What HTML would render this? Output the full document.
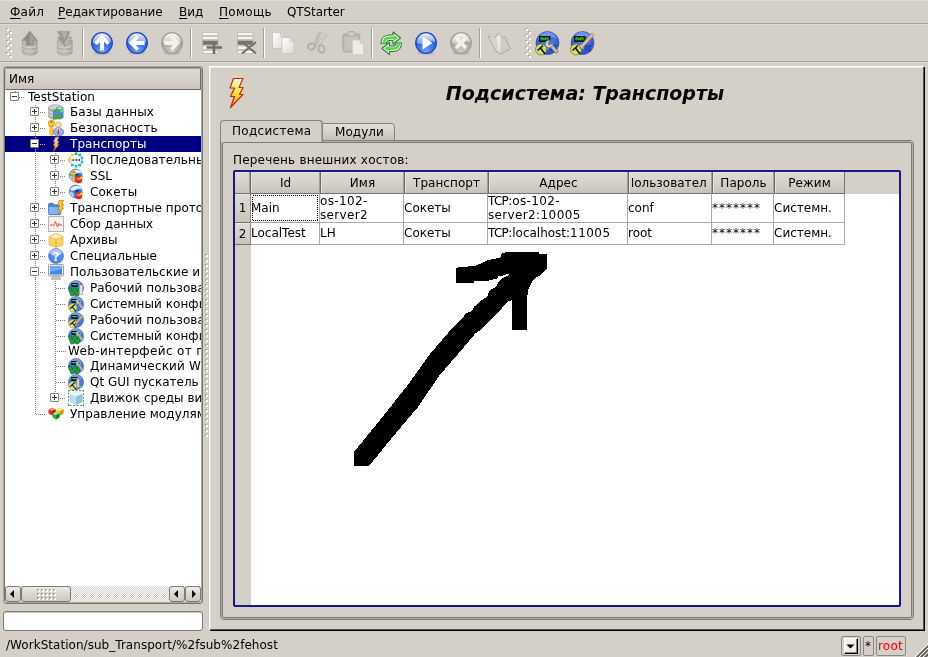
<!DOCTYPE html><html><head><meta charset="utf-8"><title>OpenSCADA</title><style>
html,body{margin:0;padding:0;}
body{width:928px;height:657px;background:#d4d0c8;overflow:hidden;position:relative;
 font-family:"DejaVu Sans","Liberation Sans",sans-serif;font-size:12px;color:#000;}
.a{position:absolute;}
.t{position:absolute;white-space:nowrap;line-height:16px;height:16px;}
u{text-decoration:underline;text-underline-offset:2px;text-decoration-thickness:1px;}
.hl{position:absolute;height:1px;}
.vl{position:absolute;width:1px;}
svg{position:absolute;overflow:visible;}
.row{position:absolute;left:0;height:16px;white-space:nowrap;line-height:16px;}
.hdr{position:absolute;box-sizing:border-box;background:linear-gradient(#dedbd4,#d4d0c8 45%,#c6c2ba);border-left:1px solid #fff;border-top:1px solid #fff;border-right:1px solid #6e6c68;border-bottom:1px solid #6e6c68;text-align:center;line-height:18px;white-space:nowrap;overflow:hidden;}
.cell{position:absolute;white-space:nowrap;line-height:14px;}
.k{letter-spacing:-.7px;}
.d{letter-spacing:.45px;}
.sbtn{position:absolute;box-sizing:border-box;border:1px solid #7d7a74;border-radius:3px;background:linear-gradient(#efede9,#d9d6cf 50%,#cfcbc3);}
</style></head><body><div id="w" style="position:absolute;left:0;top:0;width:928px;height:657px;overflow:hidden;will-change:transform;">
<div class="t" style="left:10px;top:4px;letter-spacing:.25px"><u>Ф</u>айл</div>
<div class="t" style="left:58px;top:4px;"><u>Р</u>едактирование</div>
<div class="t" style="left:179px;top:4px;"><u>В</u>ид</div>
<div class="t" style="left:219px;top:4px;letter-spacing:.3px"><u>П</u>омощь</div>
<div class="t" style="left:287px;top:4px;letter-spacing:-.1px">QTStarter</div>
<div class="hl" style="left:0;top:0;width:928px;background:#dfdcd6"></div>
<div class="hl" style="left:0;top:23px;width:928px;background:#a5a29b"></div>
<div class="hl" style="left:0;top:24px;width:928px;background:#dedbd5"></div>
<div class="hl" style="left:0;top:61px;width:928px;background:#a5a29b"></div>
<div class="hl" style="left:0;top:62px;width:928px;background:#dedbd5"></div>
<svg style="left:6px;top:28px" width="7" height="31"><rect x="0" y="0" width="2" height="1" fill="#aeaba4"/><rect x="0" y="0" width="1" height="2" fill="#aeaba4"/><rect x="1" y="1" width="2" height="2" fill="#fff"/><rect x="3" y="3" width="2" height="1" fill="#aeaba4"/><rect x="3" y="3" width="1" height="2" fill="#aeaba4"/><rect x="4" y="4" width="2" height="2" fill="#fff"/><rect x="0" y="6" width="2" height="1" fill="#aeaba4"/><rect x="0" y="6" width="1" height="2" fill="#aeaba4"/><rect x="1" y="7" width="2" height="2" fill="#fff"/><rect x="3" y="9" width="2" height="1" fill="#aeaba4"/><rect x="3" y="9" width="1" height="2" fill="#aeaba4"/><rect x="4" y="10" width="2" height="2" fill="#fff"/><rect x="0" y="12" width="2" height="1" fill="#aeaba4"/><rect x="0" y="12" width="1" height="2" fill="#aeaba4"/><rect x="1" y="13" width="2" height="2" fill="#fff"/><rect x="3" y="15" width="2" height="1" fill="#aeaba4"/><rect x="3" y="15" width="1" height="2" fill="#aeaba4"/><rect x="4" y="16" width="2" height="2" fill="#fff"/><rect x="0" y="18" width="2" height="1" fill="#aeaba4"/><rect x="0" y="18" width="1" height="2" fill="#aeaba4"/><rect x="1" y="19" width="2" height="2" fill="#fff"/><rect x="3" y="21" width="2" height="1" fill="#aeaba4"/><rect x="3" y="21" width="1" height="2" fill="#aeaba4"/><rect x="4" y="22" width="2" height="2" fill="#fff"/><rect x="0" y="24" width="2" height="1" fill="#aeaba4"/><rect x="0" y="24" width="1" height="2" fill="#aeaba4"/><rect x="1" y="25" width="2" height="2" fill="#fff"/><rect x="3" y="27" width="2" height="1" fill="#aeaba4"/><rect x="3" y="27" width="1" height="2" fill="#aeaba4"/><rect x="4" y="28" width="2" height="2" fill="#fff"/></svg>
<svg style="left:525px;top:28px" width="7" height="31"><rect x="0" y="0" width="2" height="1" fill="#aeaba4"/><rect x="0" y="0" width="1" height="2" fill="#aeaba4"/><rect x="1" y="1" width="2" height="2" fill="#fff"/><rect x="3" y="3" width="2" height="1" fill="#aeaba4"/><rect x="3" y="3" width="1" height="2" fill="#aeaba4"/><rect x="4" y="4" width="2" height="2" fill="#fff"/><rect x="0" y="6" width="2" height="1" fill="#aeaba4"/><rect x="0" y="6" width="1" height="2" fill="#aeaba4"/><rect x="1" y="7" width="2" height="2" fill="#fff"/><rect x="3" y="9" width="2" height="1" fill="#aeaba4"/><rect x="3" y="9" width="1" height="2" fill="#aeaba4"/><rect x="4" y="10" width="2" height="2" fill="#fff"/><rect x="0" y="12" width="2" height="1" fill="#aeaba4"/><rect x="0" y="12" width="1" height="2" fill="#aeaba4"/><rect x="1" y="13" width="2" height="2" fill="#fff"/><rect x="3" y="15" width="2" height="1" fill="#aeaba4"/><rect x="3" y="15" width="1" height="2" fill="#aeaba4"/><rect x="4" y="16" width="2" height="2" fill="#fff"/><rect x="0" y="18" width="2" height="1" fill="#aeaba4"/><rect x="0" y="18" width="1" height="2" fill="#aeaba4"/><rect x="1" y="19" width="2" height="2" fill="#fff"/><rect x="3" y="21" width="2" height="1" fill="#aeaba4"/><rect x="3" y="21" width="1" height="2" fill="#aeaba4"/><rect x="4" y="22" width="2" height="2" fill="#fff"/><rect x="0" y="24" width="2" height="1" fill="#aeaba4"/><rect x="0" y="24" width="1" height="2" fill="#aeaba4"/><rect x="1" y="25" width="2" height="2" fill="#fff"/><rect x="3" y="27" width="2" height="1" fill="#aeaba4"/><rect x="3" y="27" width="1" height="2" fill="#aeaba4"/><rect x="4" y="28" width="2" height="2" fill="#fff"/></svg>
<div class="vl" style="left:82px;top:28px;height:30px;background:#a19e97"></div>
<div class="vl" style="left:83px;top:28px;height:30px;background:#fff"></div>
<div class="vl" style="left:190px;top:28px;height:30px;background:#a19e97"></div>
<div class="vl" style="left:191px;top:28px;height:30px;background:#fff"></div>
<div class="vl" style="left:263px;top:28px;height:30px;background:#a19e97"></div>
<div class="vl" style="left:264px;top:28px;height:30px;background:#fff"></div>
<div class="vl" style="left:371px;top:28px;height:30px;background:#a19e97"></div>
<div class="vl" style="left:372px;top:28px;height:30px;background:#fff"></div>
<div class="vl" style="left:479px;top:28px;height:30px;background:#a19e97"></div>
<div class="vl" style="left:480px;top:28px;height:30px;background:#fff"></div>
<svg style="left:0;top:0" width="0" height="0"><defs><radialGradient id="gb" cx=".5" cy=".9" r=".9"><stop offset="0" stop-color="#6fa2ff"/><stop offset=".6" stop-color="#2b62e6"/><stop offset="1" stop-color="#1c4fd0"/></radialGradient><radialGradient id="gg" cx=".5" cy=".9" r=".9"><stop offset="0" stop-color="#cfccc6"/><stop offset=".6" stop-color="#aaa7a0"/><stop offset="1" stop-color="#9a978f"/></radialGradient><linearGradient id="gl" x1="0" y1="0" x2="0" y2="1"><stop offset="0" stop-color="#fff" stop-opacity=".95"/><stop offset="1" stop-color="#fff" stop-opacity=".35"/></linearGradient><linearGradient id="gp" x1="0" y1="0" x2="1" y2="1"><stop offset="0" stop-color="#fff"/><stop offset="1" stop-color="#dcdad6"/></linearGradient><linearGradient id="gcyl" x1="0" y1="0" x2="1" y2="0"><stop offset="0" stop-color="#b8b5ae"/><stop offset=".5" stop-color="#c9c6bf"/><stop offset="1" stop-color="#a5a29b"/></linearGradient><radialGradient id="gb2" cx=".5" cy=".35" r=".7"><stop offset="0" stop-color="#5a86f0"/><stop offset="1" stop-color="#2448c8"/></radialGradient></defs></svg>
<svg style="left:19px;top:30px" width="22" height="26" viewBox="0 0 22 26"><path d="M3.300 10v12c0 1.900 3.300 3.200 7.500 3.200s7.500-1.300 7.500-3.200V10z" fill="url(#gcyl)" stroke="#a19e97" stroke-width=".7"/><path d="M3.300 15c0 1.800 3.300 3 7.500 3s7.500-1.200 7.500-3M3.300 19c0 1.800 3.300 3 7.500 3s7.500-1.200 7.500-3" fill="none" stroke="#d9d6d0" stroke-width="1"/><path d="M3.300 16c0 1.800 3.300 3 7.500 3s7.500-1.200 7.500-3M3.300 20c0 1.800 3.300 3 7.500 3s7.500-1.200 7.500-3" fill="none" stroke="#a09d96" stroke-width=".6"/><path d="M10.800 .8L18.600 10.800H14.600V15.500H7V10.800H3Z" fill="#8f8c86" stroke="#a7a49d" stroke-width=".6" stroke-linejoin="round"/><path d="M10.800 2.500L16 10H13.500V14.500H10.800Z" fill="#a3a099"/></svg>
<svg style="left:54px;top:30px" width="22" height="26" viewBox="0 0 22 26"><path d="M3.300 10v12c0 1.900 3.300 3.200 7.500 3.200s7.500-1.300 7.500-3.200V10z" fill="url(#gcyl)" stroke="#a19e97" stroke-width=".7"/><path d="M3.300 15c0 1.800 3.300 3 7.500 3s7.500-1.200 7.500-3M3.300 19c0 1.800 3.300 3 7.500 3s7.500-1.200 7.500-3" fill="none" stroke="#d9d6d0" stroke-width="1"/><path d="M3.300 16c0 1.800 3.300 3 7.500 3s7.500-1.200 7.500-3M3.300 20c0 1.800 3.300 3 7.500 3s7.500-1.200 7.500-3" fill="none" stroke="#a09d96" stroke-width=".6"/><path d="M3.300 1.300H16.300L14 7H18.300L10.800 17L3.300 7H6.500Z" fill="#9a9790" stroke="#aaa7a0" stroke-width=".6" stroke-linejoin="round"/><path d="M7 2.300H13.500L10.500 10Z" fill="#b2afa8"/><path d="M10.800 15.500L16.500 8H14L10.800 13Z" fill="#c6c3bc"/></svg>
<svg style="left:91px;top:32px" width="22" height="23" viewBox="0 0 22 23"><ellipse cx="11" cy="21" rx="8.500" ry="1.800" fill="#000" opacity=".13"/><circle cx="11" cy="11" r="10.300" fill="url(#gb)" stroke="#1d49c4" stroke-width="1.300"/><path d="M1.700 10.500a9.300 9.300 0 0 1 18.600 0c-2.500-1.800-5.500-1.600-9.300.3s-6.800 1.500-9.300-.3z" fill="url(#gl)"/><path d="M11 2.800L18.800 10.600L16.300 13L13 9.800V18.600H9V9.800L5.700 13L3.200 10.600Z" fill="#fff"/></svg>
<svg style="left:126px;top:32px" width="22" height="23" viewBox="0 0 22 23"><ellipse cx="11" cy="21" rx="8.500" ry="1.800" fill="#000" opacity=".13"/><circle cx="11" cy="11" r="10.300" fill="url(#gb)" stroke="#1d49c4" stroke-width="1.300"/><path d="M1.700 10.500a9.300 9.300 0 0 1 18.600 0c-2.500-1.800-5.500-1.600-9.300.3s-6.800 1.500-9.300-.3z" fill="url(#gl)"/><g transform="rotate(-90 11 11)"><path d="M11 2.800L18.800 10.600L16.300 13L13 9.800V18.600H9V9.800L5.700 13L3.200 10.600Z" fill="#fff"/></g></svg>
<svg style="left:161px;top:32px" width="22" height="23" viewBox="0 0 22 23"><ellipse cx="11" cy="21" rx="8.500" ry="1.800" fill="#000" opacity=".13"/><circle cx="11" cy="11" r="10.300" fill="url(#gg)" stroke="#a29f98" stroke-width="1.300"/><path d="M1.700 10.500a9.300 9.300 0 0 1 18.600 0c-2.500-1.800-5.500-1.600-9.300.3s-6.800 1.500-9.300-.3z" fill="url(#gl)"/><g transform="rotate(90 11 11)"><path d="M11 2.800L18.800 10.600L16.300 13L13 9.800V18.600H9V9.800L5.700 13L3.200 10.600Z" fill="#f4f1ea"/></g></svg>
<svg style="left:202px;top:32px" width="21" height="23" viewBox="0 0 21 23"><rect x=".5" y="0.5" width="15.500" height="3" fill="#f8f5ee" stroke="#b9b6ae" stroke-width=".7"/><rect x=".5" y="4.5" width="15.500" height="3" fill="#f8f5ee" stroke="#b9b6ae" stroke-width=".7"/><rect x=".5" y="8.5" width="15.500" height="4.5" fill="#77746e" stroke="#b9b6ae" stroke-width=".7"/><rect x=".5" y="14" width="15.500" height="3.5" fill="#f8f5ee" stroke="#b9b6ae" stroke-width=".7"/><rect x=".5" y="18.5" width="15.500" height="3" fill="#f8f5ee" stroke="#b9b6ae" stroke-width=".7"/><path d="M4.500 15.500h15.500M12 10v12" stroke="#726f69" stroke-width="2.600" fill="none"/></svg>
<svg style="left:237px;top:32px" width="21" height="23" viewBox="0 0 21 23"><rect x=".5" y="0.5" width="15.500" height="3" fill="#f8f5ee" stroke="#b9b6ae" stroke-width=".7"/><rect x=".5" y="4.5" width="15.500" height="3" fill="#f8f5ee" stroke="#b9b6ae" stroke-width=".7"/><rect x=".5" y="8.5" width="15.500" height="4.5" fill="#77746e" stroke="#b9b6ae" stroke-width=".7"/><rect x=".5" y="14" width="15.500" height="3.5" fill="#f8f5ee" stroke="#b9b6ae" stroke-width=".7"/><rect x=".5" y="18.5" width="15.500" height="3" fill="#f8f5ee" stroke="#b9b6ae" stroke-width=".7"/><path d="M5 10l14 11.500M19 10l-14 11.500" stroke="#76736d" stroke-width="2.200" fill="none"/></svg>
<svg style="left:272px;top:32px" width="23" height="22" viewBox="0 0 23 22"><path d="M0.5 0.5h8l4 4v12h-12z" fill="url(#gp)" stroke="#c4c1ba" stroke-width=".8"/><path d="M8.5 0.5v4h4z" fill="#e6e4e0" stroke="#bcb9b2" stroke-width=".6"/><path d="M10 5.5h8l4 4v12h-12z" fill="url(#gp)" stroke="#c4c1ba" stroke-width=".8"/><path d="M18 5.5v4h4z" fill="#e6e4e0" stroke="#bcb9b2" stroke-width=".6"/></svg>
<svg style="left:307px;top:31px" width="22" height="24" viewBox="0 0 22 24"><path d="M12 1l2 .5-5.500 13.500-2-.8z" fill="#c9c6bf" stroke="#a9a69f" stroke-width=".6"/><path d="M17.500 3l2.500 1.200-8 10-1.800-1.200z" fill="#d8d5ce" stroke="#a9a69f" stroke-width=".6"/><ellipse cx="4.500" cy="15.500" rx="3.600" ry="3" fill="none" stroke="#b3b0a9" stroke-width="2" transform="rotate(-20 4.500 15.500)"/><ellipse cx="14.500" cy="18" rx="3" ry="3.800" fill="none" stroke="#b3b0a9" stroke-width="2" transform="rotate(-20 14.500 18)"/></svg>
<svg style="left:342px;top:31px" width="22" height="24" viewBox="0 0 22 24"><rect x=".8" y="3" width="17" height="18" rx="2" fill="#bab7b0" stroke="#a9a69f" stroke-width=".8"/><path d="M5 3.500c0-2 1.500-3 4.300-3s4.300 1 4.300 3v1.500h-8.600z" fill="#cfccc5" stroke="#a19e97" stroke-width=".8"/><rect x="2.500" y="5.500" width="13.500" height="14" fill="#c6c3bc"/><path d="M10.500 9h7.500l3.500 3.500v11h-11z" fill="#efece6" stroke="#cfccc5" stroke-width=".8"/><path d="M18 9v3.500h3.500z" fill="#dcd9d2" stroke="#c4c1ba" stroke-width=".5"/></svg>
<svg style="left:379px;top:30px" width="25" height="27" viewBox="0 0 25 27"><path d="M2 13.500C2 8.500 5 5 10 5L14 5L14 2L21.500 8L14 14L14 10.500L10.500 10.500C8.500 10.500 7.500 11.500 7.500 13.500Z" fill="#eefaea" stroke="#2f7d3a" stroke-width="1.100" stroke-linejoin="round"/><path d="M4.800 12.800C5.200 9.300 7.200 7.800 10.500 7.800L16.500 7.800" fill="none" stroke="#52d943" stroke-width="2.700" stroke-linecap="round"/><path d="M15 5.200L19 8L15 10.800Z" fill="#52d943"/><g transform="rotate(180 12.250 13.250)"><path d="M2 13.500C2 8.500 5 5 10 5L14 5L14 2L21.500 8L14 14L14 10.500L10.500 10.500C8.500 10.500 7.500 11.500 7.500 13.500Z" fill="#eefaea" stroke="#2f7d3a" stroke-width="1.100" stroke-linejoin="round"/><path d="M4.800 12.800C5.200 9.300 7.200 7.800 10.500 7.800L16.500 7.800" fill="none" stroke="#52d943" stroke-width="2.700" stroke-linecap="round"/><path d="M15 5.200L19 8L15 10.800Z" fill="#52d943"/></g></svg>
<svg style="left:415px;top:32px" width="22" height="23" viewBox="0 0 22 23"><ellipse cx="11" cy="21" rx="8.500" ry="1.800" fill="#000" opacity=".13"/><circle cx="11" cy="11" r="10.300" fill="url(#gb)" stroke="#1d49c4" stroke-width="1.300"/><path d="M1.700 10.500a9.300 9.300 0 0 1 18.600 0c-2.500-1.800-5.500-1.600-9.300.3s-6.800 1.500-9.300-.3z" fill="url(#gl)"/><path d="M7.500 4.500l10 6.500-10 6.500z" fill="#fff"/></svg>
<svg style="left:450px;top:32px" width="22" height="23" viewBox="0 0 22 23"><ellipse cx="11" cy="21" rx="8.500" ry="1.800" fill="#000" opacity=".13"/><circle cx="11" cy="11" r="10.300" fill="url(#gg)" stroke="#a29f98" stroke-width="1.300"/><path d="M1.700 10.500a9.300 9.300 0 0 1 18.600 0c-2.500-1.800-5.500-1.600-9.300.3s-6.800 1.500-9.300-.3z" fill="url(#gl)"/><path d="M4.800 7.300l2.500-2.500 3.700 3.700 3.700-3.700 2.500 2.500-3.700 3.700 3.700 3.700-2.500 2.500-3.700-3.700-3.700 3.700-2.500-2.500 3.700-3.700z" fill="#f4f1ea"/></svg>
<svg style="left:487px;top:32px" width="24" height="23" viewBox="0 0 24 23"><path d="M1 4l8 15.500 4.500 3 10-5.500-5.500-12.500-3 1-3.500-4.500-4 5z" fill="#c3c0b9" stroke="#aaa79f" stroke-width=".8" stroke-linejoin="round"/><path d="M2 4.500l7.500 14.500 2.500 1.500-.5-14z" fill="#d9d6d0"/><path d="M13.500 6.500l-.5 15 9.500-5-5-11z" fill="#cfccc5"/><path d="M8.500 6l3.500-4.500 2.500 4-1 15.500-2-.5z" fill="#e9e7e2" stroke="#b5b2ab" stroke-width=".4"/></svg>
<svg style="left:535px;top:31px" width="25" height="25" viewBox="0 0 25 25"><circle cx="12.500" cy="12" r="11.500" fill="url(#gb2)" stroke="#2a48b0" stroke-width=".6"/><path d="M3 8c1.500-4.500 5.500-7 9.500-7s8 2.500 9.500 7c-3-2-6-2.800-9.500-2.800s-6.500.8-9.500 2.800z" fill="#8fb0ff" opacity=".55"/><rect x="4" y="5" width="11.500" height="6" fill="#0c140c"/><rect x="5" y="6" width="9.500" height="3.800" fill="#0b4f16"/><path d="M6 9v-2h2v2M9 7v2M10.500 9v-2h2.500v2" stroke="#37d64a" stroke-width=".9" fill="none"/><path d="M12 17h11.500" stroke="#e8e840" stroke-width="1"/><path d="M14 17l2.500-3 1.500 2 2-2.500 1 3.500 2 0-2 0-1 3.500-2-2.500-1.500 2z" fill="#2c50cc" stroke="#1a2a80" stroke-width=".5"/><circle cx="6" cy="18.500" r="5.500" fill="#d6de62" stroke="#6f7a20" stroke-width=".7"/><path d="M5.500 17l4.500 6M2.500 19.500l5.500-5" stroke="#101010" stroke-width="1.500"/><path d="M13.500 14l2.500-2 7 8c.8 1.200-1.200 3-2.500 2z" fill="#bdbdbd" stroke="#6a6a6a" stroke-width=".7"/><path d="M10.500 11.500c1-2 3.500-2.500 5.200-1.500l-2.500 1.800.4 1.800 1.900.4 2.300-1.800c.6 2-.7 4-3 4.500-2.500.3-4.500-1.300-4.500-3.500z" fill="#d6d6d6" stroke="#6a6a6a" stroke-width=".7"/></svg>
<svg style="left:570px;top:31px" width="25" height="25" viewBox="0 0 25 25"><circle cx="12.500" cy="12" r="11.500" fill="url(#gb2)" stroke="#2a48b0" stroke-width=".6"/><path d="M3 8c1.500-4.500 5.500-7 9.500-7s8 2.500 9.500 7c-3-2-6-2.800-9.500-2.800s-6.500.8-9.500 2.800z" fill="#8fb0ff" opacity=".55"/><rect x="4" y="5" width="11.500" height="6" fill="#0c140c"/><rect x="5" y="6" width="9.500" height="3.800" fill="#0b4f16"/><path d="M6 9v-2h2v2M9 7v2M10.500 9v-2h2.500v2" stroke="#37d64a" stroke-width=".9" fill="none"/><path d="M12 17h11.500" stroke="#e8e840" stroke-width="1"/><path d="M14 17l2.500-3 1.500 2 2-2.500 1 3.500 2 0-2 0-1 3.500-2-2.500-1.500 2z" fill="#2c50cc" stroke="#1a2a80" stroke-width=".5"/><circle cx="6" cy="18.500" r="5.500" fill="#d6de62" stroke="#6f7a20" stroke-width=".7"/><path d="M5.500 17l4.500 6M2.500 19.500l5.500-5" stroke="#101010" stroke-width="1.500"/><path d="M10.500 14.500l11.500-12.500 2.200 2-11.500 12.500-3 .8z" fill="#e6bf8c" stroke="#9a7446" stroke-width=".6"/><path d="M9.700 17.300l.8-2.800 2.200 2z" fill="#f0e0c0"/><path d="M9.700 17.300l.4-1.300 1 .9z" fill="#202020"/></svg>
<div class="a" style="left:3px;top:66px;width:200px;height:538px;box-sizing:border-box;border:1px solid #a9a69f;border-right-color:#77756f;border-bottom-color:#77756f;border-radius:4px;"></div>
<div class="a" style="left:4px;top:67px;width:198px;height:536px;box-sizing:border-box;border:1px solid #77756f;border-right-color:#a9a69f;border-bottom-color:#a9a69f;border-radius:3px;background:#fff"></div>
<div class="a" style="left:5px;top:68px;width:196px;height:534px;overflow:hidden;"><div class="a" style="left:-5px;top:-68px;width:928px;height:657px">
<div class="a" style="left:5px;top:68px;width:196px;height:22px;box-sizing:border-box;background:linear-gradient(#dcd9d3,#d6d2ca 50%,#c9c5bd);border-top:1px solid #a9a69f;border-left:1px solid #bdbab3;border-bottom:1px solid #6e6c67;border-right:1px solid #6e6c67;"></div>
<div class="t" style="left:9px;top:71px;">Имя</div>
<div class="a" style="left:15px;top:91px;width:1px;height:1px;background:repeating-linear-gradient(180deg,#7c7a74 0 1px,transparent 1px 2px)"></div>
<div class="a" style="left:35px;top:105px;width:1px;height:310px;background:repeating-linear-gradient(180deg,#7c7a74 0 1px,transparent 1px 2px)"></div>
<div class="a" style="left:55px;top:153px;width:1px;height:40px;background:repeating-linear-gradient(180deg,#7c7a74 0 1px,transparent 1px 2px)"></div>
<div class="a" style="left:55px;top:281px;width:1px;height:118px;background:repeating-linear-gradient(180deg,#7c7a74 0 1px,transparent 1px 2px)"></div>
<div class="a" style="left:19px;top:97px;width:5px;height:1px;background:repeating-linear-gradient(90deg,#7c7a74 0 1px,transparent 1px 2px)"></div>
<div class="a" style="left:10px;top:92px;width:9px;height:9px;box-sizing:border-box;border:1px solid #85827a;border-radius:1px;background:#fff"></div>
<div class="a" style="left:12px;top:96px;width:5px;height:1px;background:#333"></div>
<div class="t" style="left:28px;top:89px;letter-spacing:0.06px;">TestStation</div>
<div class="a" style="left:40px;top:112px;width:6px;height:1px;background:repeating-linear-gradient(90deg,#7c7a74 0 1px,transparent 1px 2px)"></div>
<div class="a" style="left:30px;top:107px;width:9px;height:9px;box-sizing:border-box;border:1px solid #85827a;border-radius:1px;background:#fff"></div>
<div class="a" style="left:32px;top:111px;width:5px;height:1px;background:#333"></div>
<div class="a" style="left:34px;top:109px;width:1px;height:5px;background:#333"></div>
<svg style="left:48px;top:104px" width="16" height="16" viewBox="0 0 16 16"><path d="M.5 3.500v9c0 1.600 3 2.800 7 2.800s7-1.200 7-2.800v-9z" fill="#b4b4b4" stroke="#8a8a8a" stroke-width=".6"/><path d="M.5 6.500c0 1.500 3 2.600 7 2.600M.5 9.500c0 1.500 3 2.600 7 2.600" fill="none" stroke="#e6e6e6" stroke-width=".9"/><ellipse cx="7.500" cy="3.500" rx="7" ry="2.800" fill="#d2d2d2" stroke="#909090" stroke-width=".6"/><path d="M8 3.800l4-1.200 3.500 1.200v10l-3.500 1.700-4-1.700z" fill="#3d8fb0"/><path d="M5 6l6.500-2 .5 10-7 1.800z" fill="#3faa3f"/><path d="M5.200 8l6.400-1.800.2 3.300-6.500 2z" fill="#5a86e0"/><path d="M8.500 4.200l3.800-1 2.800.9-3.600 1.100z" fill="#e8f4e8"/><path d="M12 5.500l3.300-1v3l-3.300 1z" fill="#6fcf6f"/></svg>
<div class="t" style="left:70px;top:104px;letter-spacing:0.06px;">Базы данных</div>
<div class="a" style="left:40px;top:128px;width:6px;height:1px;background:repeating-linear-gradient(90deg,#7c7a74 0 1px,transparent 1px 2px)"></div>
<div class="a" style="left:30px;top:123px;width:9px;height:9px;box-sizing:border-box;border:1px solid #85827a;border-radius:1px;background:#fff"></div>
<div class="a" style="left:32px;top:127px;width:5px;height:1px;background:#333"></div>
<div class="a" style="left:34px;top:125px;width:1px;height:5px;background:#333"></div>
<svg style="left:48px;top:120px" width="16" height="16" viewBox="0 0 16 16"><circle cx="10.300" cy="4.800" r="3.100" fill="#f6d7a8" stroke="#c89a5a" stroke-width=".6"/><path d="M5.300 12.300C5.300 9.500 7.300 8 10.400 8S15.600 9.500 15.600 12.300 13.500 15.600 10.400 15.600 5.300 14.800 5.300 12.300Z" fill="#8db4f2" stroke="#4a72c8" stroke-width=".7"/><path d="M8.800 8.600h3l-.7 5.500h-1.600z" fill="#e8f0ff"/><path d="M9.800 9h1l.4 4.300-.9 1-.9-1z" fill="#d81e1e"/><rect x=".6" y=".4" width="5.600" height="5.800" rx="2" fill="#ffd61a" stroke="#c8780a" stroke-width=".7"/><rect x="2.200" y="1.500" width="2.400" height="1.200" rx=".6" fill="#7a4a00"/><path d="M2.300 6h2.600v8.700l-1.300 1.100-1.300-1.100v-1.100l-.9-.7.900-.8v-1.200l-.9-.7.900-.8z" fill="#ffd61a" stroke="#c8780a" stroke-width=".6"/></svg>
<div class="t" style="left:70px;top:120px;letter-spacing:0.06px;">Безопасность</div>
<div class="a" style="left:5px;top:136px;width:196px;height:16px;background:#000080"></div>
<div class="a" style="left:35px;top:137px;width:1px;height:15px;background:repeating-linear-gradient(180deg,#b9b08a 0 1px,transparent 1px 2px)"></div>
<div class="a" style="left:40px;top:144px;width:6px;height:1px;background:repeating-linear-gradient(90deg,#b9b08a 0 1px,transparent 1px 2px)"></div>
<div class="a" style="left:30px;top:139px;width:9px;height:9px;box-sizing:border-box;border:1px solid #85827a;border-radius:1px;background:#fff"></div>
<div class="a" style="left:32px;top:143px;width:5px;height:1px;background:#333"></div>
<svg style="left:48px;top:136px" width="16" height="16" viewBox="0 0 16 16"><defs><linearGradient id="lgb" x1="0" y1="0" x2="0" y2="1"><stop offset="0" stop-color="#c9c9dc"/><stop offset=".3" stop-color="#d6d4b8"/><stop offset=".6" stop-color="#dcd24e"/><stop offset="1" stop-color="#f08a18"/></linearGradient></defs><path d="M7.500 .8L11.200 .8L9.400 5L11.200 5L9.600 8.500L11.200 8.500L5.300 15.600L7 10L5.200 10L6.800 6L5.200 6Z" fill="url(#lgb)" stroke="#a03a2a" stroke-width=".7" stroke-linejoin="round"/></svg>
<div class="t" style="left:70px;top:136px;letter-spacing:0.06px;color:#fff;">Транспорты</div>
<div class="a" style="left:60px;top:160px;width:6px;height:1px;background:repeating-linear-gradient(90deg,#7c7a74 0 1px,transparent 1px 2px)"></div>
<div class="a" style="left:50px;top:155px;width:9px;height:9px;box-sizing:border-box;border:1px solid #85827a;border-radius:1px;background:#fff"></div>
<div class="a" style="left:52px;top:159px;width:5px;height:1px;background:#333"></div>
<div class="a" style="left:54px;top:157px;width:1px;height:5px;background:#333"></div>
<svg style="left:68px;top:152px" width="16" height="16" viewBox="0 0 16 16"><rect x="6.7" y="0.4" width="2.700" height="2.700" fill="#1fbf2f"/><rect x="10.3" y="1.6" width="2.700" height="2.700" fill="#1cc0c0"/><rect x="12.5" y="4.7" width="2.700" height="2.700" fill="#1cc0c0"/><rect x="12.5" y="8.6" width="2.700" height="2.700" fill="#1cc0c0"/><rect x="10.3" y="11.7" width="2.700" height="2.700" fill="#1cc0c0"/><rect x="6.7" y="12.8" width="2.700" height="2.700" fill="#1cc0c0"/><rect x="3.0" y="11.7" width="2.700" height="2.700" fill="#1cc0c0"/><rect x="0.8" y="8.6" width="2.700" height="2.700" fill="#c9c9d4"/><rect x="0.8" y="4.7" width="2.700" height="2.700" fill="#e6dc1e"/><rect x="3.0" y="1.6" width="2.700" height="2.700" fill="#e6dc1e"/><rect x="0" y="6.300" width="2.600" height="3.200" fill="#e6dc1e"/><rect x="2.800" y="6" width="10.200" height="4" fill="#fff"/><path d="M3.500 8h1.200M5.300 7.300v1.600M6.500 8h1.300M8.500 7v2M9.800 8h1.200M11.600 7v2" stroke="#2436d8" stroke-width="1.100" fill="none"/></svg>
<div class="t" style="left:90px;top:152px;letter-spacing:0.06px;">Последовательные интерфейсы</div>
<div class="a" style="left:60px;top:176px;width:6px;height:1px;background:repeating-linear-gradient(90deg,#7c7a74 0 1px,transparent 1px 2px)"></div>
<div class="a" style="left:50px;top:171px;width:9px;height:9px;box-sizing:border-box;border:1px solid #85827a;border-radius:1px;background:#fff"></div>
<div class="a" style="left:52px;top:175px;width:5px;height:1px;background:#333"></div>
<div class="a" style="left:54px;top:173px;width:1px;height:5px;background:#333"></div>
<svg style="left:68px;top:168px" width="16" height="16" viewBox="0 0 16 16"><circle cx="7.700" cy="7.500" r="6.400" fill="#3f7edc" stroke="#3a6cc4" stroke-width=".7"/><path d="M2 5.500C3.500 2.500 6.500 1.300 9.500 1.800 12 2.300 13.500 4 13.800 5.500 11.500 4.200 9.500 4.500 8 5.800 6.500 7 4 7.500 2 5.500Z" fill="#e4efff"/><path d="M1.600 8C3 7 4.500 8 5.500 9.500S6.500 12.500 5.500 13.300C3.300 12.500 1.800 10.500 1.600 8Z" fill="#a9ccf6"/><path d="M6.500 6.500C8 5.500 10 5.500 11.500 6.500L10 8.500 7.500 8.800Z" fill="#1448a8"/><circle cx="10.800" cy="11.700" r="3.500" fill="#e42222"/><circle cx="9.800" cy="10.700" r="1.500" fill="#f46a5a"/><path d="M10.500 10.800C11.500 9 12.500 9.800 13.200 8.200 13.800 9 14.500 8.800 15.300 7.800 15.500 9.500 14.500 10 13.800 11 13 11.800 12 11 11.300 12Z" fill="#ffb21a"/><path d="M12.500 10.200l1.500-1.200" stroke="#fff27a" stroke-width=".7"/><rect x="3.600" y="3.200" width="4" height="3.800" rx="1.400" fill="#ffd21a" stroke="#c8860a" stroke-width=".6"/><rect x="4.800" y="3.900" width="1.600" height=".9" fill="#7a4a00"/><path d="M4.700 7h2v6.500l-1 .9-1-.9z" fill="#ffd21a" stroke="#c8860a" stroke-width=".5"/></svg>
<div class="t" style="left:90px;top:168px;letter-spacing:0.06px;">SSL</div>
<div class="a" style="left:60px;top:192px;width:6px;height:1px;background:repeating-linear-gradient(90deg,#7c7a74 0 1px,transparent 1px 2px)"></div>
<div class="a" style="left:50px;top:187px;width:9px;height:9px;box-sizing:border-box;border:1px solid #85827a;border-radius:1px;background:#fff"></div>
<div class="a" style="left:52px;top:191px;width:5px;height:1px;background:#333"></div>
<div class="a" style="left:54px;top:189px;width:1px;height:5px;background:#333"></div>
<svg style="left:68px;top:184px" width="16" height="16" viewBox="0 0 16 16"><circle cx="7.700" cy="7.500" r="6.400" fill="#3f7edc" stroke="#3a6cc4" stroke-width=".7"/><path d="M2 5.500C3.500 2.500 6.500 1.300 9.500 1.800 12 2.300 13.500 4 13.800 5.500 11.500 4.200 9.500 4.500 8 5.800 6.500 7 4 7.500 2 5.500Z" fill="#e4efff"/><path d="M1.600 8C3 7 4.500 8 5.500 9.500S6.500 12.500 5.500 13.300C3.300 12.500 1.800 10.500 1.600 8Z" fill="#a9ccf6"/><path d="M6.500 6.500C8 5.500 10 5.500 11.500 6.500L10 8.500 7.500 8.800Z" fill="#1448a8"/><circle cx="10.800" cy="11.700" r="3.500" fill="#e42222"/><circle cx="9.800" cy="10.700" r="1.500" fill="#f46a5a"/><path d="M10.500 10.800C11.500 9 12.500 9.800 13.200 8.200 13.800 9 14.500 8.800 15.300 7.800 15.500 9.500 14.500 10 13.800 11 13 11.800 12 11 11.300 12Z" fill="#ffb21a"/><path d="M12.500 10.200l1.500-1.200" stroke="#fff27a" stroke-width=".7"/></svg>
<div class="t" style="left:90px;top:184px;letter-spacing:0.06px;">Сокеты</div>
<div class="a" style="left:40px;top:208px;width:6px;height:1px;background:repeating-linear-gradient(90deg,#7c7a74 0 1px,transparent 1px 2px)"></div>
<div class="a" style="left:30px;top:203px;width:9px;height:9px;box-sizing:border-box;border:1px solid #85827a;border-radius:1px;background:#fff"></div>
<div class="a" style="left:32px;top:207px;width:5px;height:1px;background:#333"></div>
<div class="a" style="left:34px;top:205px;width:1px;height:5px;background:#333"></div>
<svg style="left:48px;top:200px" width="16" height="16" viewBox="0 0 16 16"><path d="M.5 4.500c0-.8.500-1.200 1.200-1.200h3.300l1.200 1.500h5.500c.7 0 1.200.5 1.200 1.200v7.500c0 .7-.5 1.200-1.200 1.200h-10c-.7 0-1.200-.5-1.200-1.200z" fill="#3f86e8" stroke="#2a5fb8" stroke-width=".6"/><path d="M1 7h11.500v6.300c0 .5-.3.700-.7.700h-10.100c-.4 0-.7-.3-.7-.7z" fill="#7fb4f8"/><path d="M11 .5h4.500l-1.800 4h1.800l-1.600 3.500h1.600l-5.500 6.500 1.700-5.300h-1.700l1.700-3.700h-1.800z" fill="#ffd21a" stroke="#d06a0a" stroke-width=".7"/></svg>
<div class="t" style="left:70px;top:200px;letter-spacing:0.06px;">Транспортные протоколы</div>
<div class="a" style="left:40px;top:224px;width:6px;height:1px;background:repeating-linear-gradient(90deg,#7c7a74 0 1px,transparent 1px 2px)"></div>
<div class="a" style="left:30px;top:219px;width:9px;height:9px;box-sizing:border-box;border:1px solid #85827a;border-radius:1px;background:#fff"></div>
<div class="a" style="left:32px;top:223px;width:5px;height:1px;background:#333"></div>
<div class="a" style="left:34px;top:221px;width:1px;height:5px;background:#333"></div>
<svg style="left:48px;top:216px" width="16" height="16" viewBox="0 0 16 16"><rect x=".5" y=".5" width="15" height="15" fill="#f4f2ee" stroke="#b8b4ac" stroke-width="1"/><path d="M2 9.500l2-1 1.500 1.500 2-4.500 2 5.500 1.500-3.500 1.500 2 1.500-.8" fill="none" stroke="#e05050" stroke-width="1"/></svg>
<div class="t" style="left:70px;top:216px;letter-spacing:0.06px;">Сбор данных</div>
<div class="a" style="left:40px;top:240px;width:6px;height:1px;background:repeating-linear-gradient(90deg,#7c7a74 0 1px,transparent 1px 2px)"></div>
<div class="a" style="left:30px;top:235px;width:9px;height:9px;box-sizing:border-box;border:1px solid #85827a;border-radius:1px;background:#fff"></div>
<div class="a" style="left:32px;top:239px;width:5px;height:1px;background:#333"></div>
<div class="a" style="left:34px;top:237px;width:1px;height:5px;background:#333"></div>
<svg style="left:48px;top:232px" width="16" height="16" viewBox="0 0 16 16"><path d="M1 4.500l7-3 7 3v8.500l-7 2.500-7-2.500z" fill="#fbd25e" stroke="#d8a838" stroke-width=".6"/><path d="M1 4.500l7 2.500 7-2.500-7-3z" fill="#fff2c4" stroke="#d8a838" stroke-width=".4"/><path d="M8 7v8.500" stroke="#d9a528" stroke-width=".7"/></svg>
<div class="t" style="left:70px;top:232px;letter-spacing:0.06px;">Архивы</div>
<div class="a" style="left:40px;top:256px;width:6px;height:1px;background:repeating-linear-gradient(90deg,#7c7a74 0 1px,transparent 1px 2px)"></div>
<div class="a" style="left:30px;top:251px;width:9px;height:9px;box-sizing:border-box;border:1px solid #85827a;border-radius:1px;background:#fff"></div>
<div class="a" style="left:32px;top:255px;width:5px;height:1px;background:#333"></div>
<div class="a" style="left:34px;top:253px;width:1px;height:5px;background:#333"></div>
<svg style="left:48px;top:248px" width="16" height="16" viewBox="0 0 16 16"><circle cx="8" cy="8" r="7.500" fill="#4a8af2" stroke="#3a68c0" stroke-width=".6"/><ellipse cx="8" cy="4.500" rx="6" ry="3.600" fill="#cfe2ff" opacity=".75"/><text x="8" y="12.500" font-family="DejaVu Sans,Liberation Sans,sans-serif" font-weight="bold" font-size="12" text-anchor="middle" fill="#fff">?</text></svg>
<div class="t" style="left:70px;top:248px;letter-spacing:0.06px;">Специальные</div>
<div class="a" style="left:40px;top:272px;width:6px;height:1px;background:repeating-linear-gradient(90deg,#7c7a74 0 1px,transparent 1px 2px)"></div>
<div class="a" style="left:30px;top:267px;width:9px;height:9px;box-sizing:border-box;border:1px solid #85827a;border-radius:1px;background:#fff"></div>
<div class="a" style="left:32px;top:271px;width:5px;height:1px;background:#333"></div>
<svg style="left:48px;top:264px" width="16" height="16" viewBox="0 0 16 16"><rect x=".5" y=".5" width="15" height="11.500" rx="1" fill="#e6e6e6" stroke="#8a8a8a" stroke-width=".8"/><rect x="2" y="2" width="12" height="8.500" fill="#3f86f0"/><path d="M2 2h12v3l-12 3z" fill="#6fa8ff"/><path d="M5 12h6l1 2.500h-8z" fill="#c8c8c8" stroke="#8a8a8a" stroke-width=".5"/><rect x="3" y="14.300" width="10" height="1.400" rx=".5" fill="#d8d8d8" stroke="#8a8a8a" stroke-width=".4"/></svg>
<div class="t" style="left:70px;top:264px;letter-spacing:0.06px;">Пользовательские интерфейсы</div>
<div class="a" style="left:56px;top:288px;width:10px;height:1px;background:repeating-linear-gradient(90deg,#7c7a74 0 1px,transparent 1px 2px)"></div>
<svg style="left:68px;top:280px" width="16" height="16" viewBox="0 0 16 16"><circle cx="8" cy="8" r="7.600" fill="#4b78dc" stroke="#3456b0" stroke-width=".5"/><path d="M1.500 6c1-3.500 4-5.300 6.500-5.300s5.500 1.800 6.500 5.300c-2-1.500-4-2-6.500-2s-4.500.5-6.500 2z" fill="#7fa4f4" opacity=".8"/><rect x="3.300" y="3" width="6.400" height="4" fill="#101810"/><rect x="4.300" y="4" width="4.400" height="1.200" fill="#30e040"/><path d="M.3 7.800h2.800l1 4.200 1.600-4.200h2.200l1.400 4.200 1.100-4.200h2.600l-2.500 8h-2.300l-1.400-3.800-1.500 3.800h-2.400z" fill="#1fa82f" stroke="#0a5a14" stroke-width=".6"/><path d="M11.300 14.500v-8l1.700-3.500 1.700 3.500v8z" fill="#e4e4e4" stroke="#8a8a8a" stroke-width=".5"/><path d="M12 5l1-2.300 1 2.300z" fill="#e02828"/><path d="M10.500 15.500l1-3v3zM15.500 15.500l-1-3v3z" fill="#c0c0c0"/></svg>
<div class="t" style="left:90px;top:280px;letter-spacing:0.06px;">Рабочий пользовательский интерфейс (Qt)</div>
<div class="a" style="left:56px;top:304px;width:10px;height:1px;background:repeating-linear-gradient(90deg,#7c7a74 0 1px,transparent 1px 2px)"></div>
<svg style="left:68px;top:296px" width="16" height="16" viewBox="0 0 16 16"><circle cx="8" cy="8" r="7.600" fill="#4b78dc" stroke="#3456b0" stroke-width=".5"/><path d="M1.500 6c1-3.500 4-5.300 6.500-5.300s5.500 1.800 6.500 5.300c-2-1.500-4-2-6.500-2s-4.500.5-6.500 2z" fill="#7fa4f4" opacity=".8"/><rect x="3.300" y="3" width="6.400" height="4" fill="#101810"/><rect x="4.300" y="4" width="4.400" height="1.200" fill="#30e040"/><circle cx="4.800" cy="11.800" r="4.200" fill="#dde27a" stroke="#7a8428" stroke-width=".5"/><path d="M4 10.500l4 5M1.800 12.800l5-4.300" stroke="#101010" stroke-width="1.100"/><path d="M9 6.500l1.500-1.300 4.800 6.200c.5.800-.8 2-1.700 1.300z" fill="#c8c8c8" stroke="#707070" stroke-width=".6"/><path d="M8 4.500c.8-1.200 2.500-1.500 3.500-.8l-1.700 1.300.4 1.200 1.300.2 1.500-1.200c.3 1.300-.5 2.600-2 2.900-1.600.2-3-1-3-2.600z" fill="#d8d8d8" stroke="#707070" stroke-width=".5"/></svg>
<div class="t" style="left:90px;top:296px;letter-spacing:0.06px;">Системный конфигуратор (Qt)</div>
<div class="a" style="left:56px;top:320px;width:10px;height:1px;background:repeating-linear-gradient(90deg,#7c7a74 0 1px,transparent 1px 2px)"></div>
<svg style="left:68px;top:312px" width="16" height="16" viewBox="0 0 16 16"><circle cx="8" cy="8" r="7.600" fill="#4b78dc" stroke="#3456b0" stroke-width=".5"/><path d="M1.500 6c1-3.500 4-5.300 6.500-5.300s5.500 1.800 6.500 5.300c-2-1.500-4-2-6.500-2s-4.500.5-6.500 2z" fill="#7fa4f4" opacity=".8"/><rect x="3.300" y="3" width="6.400" height="4" fill="#101810"/><rect x="4.300" y="4" width="4.400" height="1.200" fill="#30e040"/><circle cx="4.800" cy="11.800" r="4.200" fill="#dde27a" stroke="#7a8428" stroke-width=".5"/><path d="M4 10.500l4 5M1.800 12.800l5-4.300" stroke="#101010" stroke-width="1.100"/><path d="M7 11l7.300-8 1.300 1.200-7.300 8-1.800.6z" fill="#e8c088" stroke="#8a6a3a" stroke-width=".5"/><path d="M6.500 12.800l.5-1.800 1.300 1.200z" fill="#303030"/></svg>
<div class="t" style="left:90px;top:312px;letter-spacing:0.06px;">Рабочий пользовательский интерфейс (Web)</div>
<div class="a" style="left:56px;top:336px;width:10px;height:1px;background:repeating-linear-gradient(90deg,#7c7a74 0 1px,transparent 1px 2px)"></div>
<svg style="left:68px;top:328px" width="16" height="16" viewBox="0 0 16 16"><circle cx="8" cy="8" r="7.600" fill="#4b78dc" stroke="#3456b0" stroke-width=".5"/><path d="M1.500 6c1-3.500 4-5.300 6.500-5.300s5.500 1.800 6.500 5.300c-2-1.500-4-2-6.500-2s-4.500.5-6.500 2z" fill="#7fa4f4" opacity=".8"/><rect x="3.300" y="3" width="6.400" height="4" fill="#101810"/><rect x="4.300" y="4" width="4.400" height="1.200" fill="#30e040"/><path d="M.3 7.800h2.800l1 4.200 1.600-4.200h2.200l1.400 4.200 1.100-4.200h2.600l-2.500 8h-2.300l-1.400-3.800-1.500 3.800h-2.400z" fill="#1fa82f" stroke="#0a5a14" stroke-width=".6"/><path d="M9 6.500l1.500-1.300 4.800 6.200c.5.800-.8 2-1.700 1.300z" fill="#c8c8c8" stroke="#707070" stroke-width=".6"/><path d="M8 4.500c.8-1.200 2.500-1.500 3.500-.8l-1.700 1.300.4 1.200 1.300.2 1.500-1.200c.3 1.300-.5 2.600-2 2.900-1.600.2-3-1-3-2.600z" fill="#d8d8d8" stroke="#707070" stroke-width=".5"/></svg>
<div class="t" style="left:90px;top:328px;letter-spacing:0.06px;">Системный конфигуратор (Web)</div>
<div class="a" style="left:55px;top:351px;width:11px;height:1px;background:repeating-linear-gradient(90deg,#7c7a74 0 1px,transparent 1px 2px)"></div>
<div class="t" style="left:68px;top:343px;letter-spacing:0.36px;">Web-интерфейс от прототипа</div>
<div class="a" style="left:56px;top:366px;width:10px;height:1px;background:repeating-linear-gradient(90deg,#7c7a74 0 1px,transparent 1px 2px)"></div>
<svg style="left:68px;top:358px" width="16" height="16" viewBox="0 0 16 16"><circle cx="8" cy="8" r="7.600" fill="#4b78dc" stroke="#3456b0" stroke-width=".5"/><path d="M1.500 6c1-3.500 4-5.300 6.500-5.300s5.500 1.800 6.500 5.300c-2-1.500-4-2-6.500-2s-4.500.5-6.500 2z" fill="#7fa4f4" opacity=".8"/><rect x="3.300" y="3" width="6.400" height="4" fill="#101810"/><rect x="4.300" y="4" width="4.400" height="1.200" fill="#30e040"/><path d="M.3 7.800h2.800l1 4.200 1.600-4.200h2.200l1.400 4.200 1.100-4.200h2.600l-2.500 8h-2.300l-1.400-3.800-1.500 3.800h-2.400z" fill="#1fa82f" stroke="#0a5a14" stroke-width=".6"/><path d="M9 6.500l1.500-1.300 4.800 6.200c.5.800-.8 2-1.700 1.300z" fill="#c8c8c8" stroke="#707070" stroke-width=".6"/><path d="M8 4.500c.8-1.200 2.500-1.500 3.500-.8l-1.700 1.300.4 1.200 1.300.2 1.500-1.200c.3 1.300-.5 2.600-2 2.900-1.600.2-3-1-3-2.600z" fill="#d8d8d8" stroke="#707070" stroke-width=".5"/></svg>
<div class="t" style="left:90px;top:358px;letter-spacing:0.15px;">Динамический WEB конфигуратор</div>
<div class="a" style="left:56px;top:382px;width:10px;height:1px;background:repeating-linear-gradient(90deg,#7c7a74 0 1px,transparent 1px 2px)"></div>
<svg style="left:68px;top:374px" width="16" height="16" viewBox="0 0 16 16"><circle cx="8" cy="8" r="7.600" fill="#4b78dc" stroke="#3456b0" stroke-width=".5"/><path d="M1.500 6c1-3.500 4-5.300 6.500-5.300s5.500 1.800 6.500 5.300c-2-1.500-4-2-6.500-2s-4.500.5-6.500 2z" fill="#7fa4f4" opacity=".8"/><rect x="3.300" y="3" width="6.400" height="4" fill="#101810"/><rect x="4.300" y="4" width="4.400" height="1.200" fill="#30e040"/><circle cx="4.800" cy="11.800" r="4.200" fill="#dde27a" stroke="#7a8428" stroke-width=".5"/><path d="M4 10.500l4 5M1.800 12.800l5-4.300" stroke="#101010" stroke-width="1.100"/><path d="M8.500 6l1.500-3.500 1.500 3.500v7.500h-3z" fill="#d0d0d0" stroke="#707070" stroke-width=".5"/><path d="M9.300 4l.7-1.800.7 1.800z" fill="#e03030"/><path d="M7 13.500l1.500-3v3zM13 13.500l-1.500-3v3z" fill="#b0b0b0"/></svg>
<div class="t" style="left:90px;top:374px;letter-spacing:0px;">Qt GUI пускатель</div>
<div class="a" style="left:60px;top:398px;width:6px;height:1px;background:repeating-linear-gradient(90deg,#7c7a74 0 1px,transparent 1px 2px)"></div>
<div class="a" style="left:50px;top:393px;width:9px;height:9px;box-sizing:border-box;border:1px solid #85827a;border-radius:1px;background:#fff"></div>
<div class="a" style="left:52px;top:397px;width:5px;height:1px;background:#333"></div>
<div class="a" style="left:54px;top:395px;width:1px;height:5px;background:#333"></div>
<svg style="left:68px;top:390px" width="16" height="16" viewBox="0 0 16 16"><rect x=".5" y=".5" width="15" height="15" fill="none" stroke="#303030" stroke-width=".6" stroke-dasharray="2 1.500"/><path d="M1.500 4l6.500-2.500 6.500 2.500v8l-6.500 3-6.500-3z" fill="#b8e0e8"/><path d="M1.500 4l6.500 2.500 6.500-2.500-6.500-2.500z" fill="#e4f6f8"/><path d="M8 6.500v8.500l6.500-3v-8z" fill="#8cc8d4"/><rect x="0" y="0" width="1.500" height="1.500" fill="#20c040"/><rect x="14.500" y="0" width="1.500" height="1.500" fill="#20c040"/><rect x="0" y="14.500" width="1.500" height="1.500" fill="#20c040"/><rect x="14.500" y="14.500" width="1.500" height="1.500" fill="#20c040"/></svg>
<div class="t" style="left:90px;top:390px;letter-spacing:0.06px;">Движок среды визуализации и управления</div>
<div class="a" style="left:36px;top:414px;width:10px;height:1px;background:repeating-linear-gradient(90deg,#7c7a74 0 1px,transparent 1px 2px)"></div>
<svg style="left:48px;top:406px" width="16" height="16" viewBox="0 0 16 16"><path d="M0.5 3.5l3.500-1.800 3.500 1.800v4l-3.500 2-3.500-2z" fill="#e02818"/><path d="M0.5 3.5l3.500 1.800 3.500-1.800-3.500-1.800z" fill="#ff8a7a"/><path d="M4 5.3v4l3.500-2v-4z" fill="#a81408"/><path d="M8.5 3.5l3.500-1.800 3.500 1.800v4l-3.500 2-3.500-2z" fill="#f0c818"/><path d="M8.5 3.5l3.500 1.800 3.500-1.800-3.500-1.800z" fill="#fff08a"/><path d="M12 5.3v4l3.500-2v-4z" fill="#c89408"/><path d="M4.5 7.5l3.500-1.800 3.500 1.800v4l-3.500 2-3.500-2z" fill="#28b828"/><path d="M4.5 7.5l3.500 1.800 3.500-1.800-3.500-1.800z" fill="#9af09a"/><path d="M8 9.3v4l3.500-2v-4z" fill="#108a10"/></svg>
<div class="t" style="left:70px;top:406px;letter-spacing:0.06px;">Управление модулями</div>
<div class="a" style="left:5px;top:586px;width:196px;height:16px;background:#e4e1dc;background-image:repeating-conic-gradient(#fff 0 25%,#d4d0c8 0 50%);background-size:2px 2px;"></div>
<div class="sbtn" style="left:5px;top:586px;width:16px;height:16px;"></div>
<svg style="left:0;top:0" width="928" height="657"><polygon points="10,594 14,590 14,598" fill="#000"/></svg>
<div class="sbtn" style="left:21px;top:586px;width:50px;height:16px;"></div>
<svg style="left:37px;top:589px" width="20" height="12"><rect x="1" y="1" width="2" height="2" fill="#fff"/><rect x="0" y="0" width="1.500" height="1.500" fill="#8a8780"/><rect x="5" y="1" width="2" height="2" fill="#fff"/><rect x="4" y="0" width="1.500" height="1.500" fill="#8a8780"/><rect x="9" y="1" width="2" height="2" fill="#fff"/><rect x="8" y="0" width="1.500" height="1.500" fill="#8a8780"/><rect x="13" y="1" width="2" height="2" fill="#fff"/><rect x="12" y="0" width="1.500" height="1.500" fill="#8a8780"/><rect x="17" y="1" width="2" height="2" fill="#fff"/><rect x="16" y="0" width="1.500" height="1.500" fill="#8a8780"/><rect x="1" y="5" width="2" height="2" fill="#fff"/><rect x="0" y="4" width="1.500" height="1.500" fill="#8a8780"/><rect x="5" y="5" width="2" height="2" fill="#fff"/><rect x="4" y="4" width="1.500" height="1.500" fill="#8a8780"/><rect x="9" y="5" width="2" height="2" fill="#fff"/><rect x="8" y="4" width="1.500" height="1.500" fill="#8a8780"/><rect x="13" y="5" width="2" height="2" fill="#fff"/><rect x="12" y="4" width="1.500" height="1.500" fill="#8a8780"/><rect x="17" y="5" width="2" height="2" fill="#fff"/><rect x="16" y="4" width="1.500" height="1.500" fill="#8a8780"/><rect x="1" y="9" width="2" height="2" fill="#fff"/><rect x="0" y="8" width="1.500" height="1.500" fill="#8a8780"/><rect x="5" y="9" width="2" height="2" fill="#fff"/><rect x="4" y="8" width="1.500" height="1.500" fill="#8a8780"/><rect x="9" y="9" width="2" height="2" fill="#fff"/><rect x="8" y="8" width="1.500" height="1.500" fill="#8a8780"/><rect x="13" y="9" width="2" height="2" fill="#fff"/><rect x="12" y="8" width="1.500" height="1.500" fill="#8a8780"/><rect x="17" y="9" width="2" height="2" fill="#fff"/><rect x="16" y="8" width="1.500" height="1.500" fill="#8a8780"/></svg>
<div class="sbtn" style="left:169px;top:586px;width:16px;height:16px;"></div>
<svg style="left:0;top:0" width="928" height="657"><polygon points="174,594 178,590 178,598" fill="#000"/></svg>
<div class="sbtn" style="left:185px;top:586px;width:16px;height:16px;"></div>
<svg style="left:0;top:0" width="928" height="657"><polygon points="196,594 192,590 192,598" fill="#000"/></svg>
</div></div>
<div class="a" style="left:3px;top:611px;width:200px;height:20px;box-sizing:border-box;border:1px solid #7d7a74;border-radius:3px;background:#fff;box-shadow:inset 0 1px 0 #c8c5be"></div>
<svg style="left:205px;top:254px" width="3" height="185"><defs><pattern id="spg" width="3" height="5" patternUnits="userSpaceOnUse"><rect x="0" y="0" width="2" height="1" fill="#a8a59e"/><rect x="0" y="1" width="1" height="1" fill="#a8a59e"/><rect x="1" y="1" width="2" height="2" fill="#fff"/></pattern></defs><rect x="0" y="0" width="3" height="183" fill="url(#spg)"/></svg>
<div class="a" style="left:209px;top:66px;width:716px;height:565px;box-sizing:border-box;border-left:2px solid #fff;border-top:2px solid #fff;border-right:1px solid #000;border-bottom:1px solid #000;"></div>
<div class="vl" style="left:210px;top:68px;height:561px;background:#e9e7e2"></div>
<div class="hl" style="left:211px;top:67px;width:712px;background:#e9e7e2"></div>
<div class="vl" style="left:923px;top:67px;height:563px;background:#55534f"></div>
<div class="hl" style="left:210px;top:629px;width:714px;background:#55534f"></div>
<svg style="left:228px;top:77px" width="17" height="32" viewBox="0 0 17 32"><defs><linearGradient id="lg1" x1="0" y1="0" x2="0" y2="1"><stop offset="0" stop-color="#fffbe0"/><stop offset=".45" stop-color="#ffe93a"/><stop offset="1" stop-color="#ff9a10"/></linearGradient></defs><path d="M5.500 1.500h9.500l-4 9h4l-3.500 7h3.500l-12.500 13 4-11h-4l4-8.500h-4.500z" fill="url(#lg1)" stroke="#c02a0a" stroke-width="1.200" stroke-linejoin="round"/></svg>
<div class="a" style="left:246px;top:80px;width:678px;text-align:center;font-weight:bold;font-style:italic;font-size:19px;line-height:26px;white-space:nowrap;">Подсистема: Транспорты</div>
<div class="a" style="left:220px;top:140px;width:694px;height:480px;box-sizing:border-box;border:1px solid #7c7a74;border-radius:0 4px 4px 4px;"></div>
<div class="a" style="left:221px;top:141px;width:692px;height:478px;box-sizing:border-box;border:1px solid #b0ada6;border-radius:0 3px 3px 3px;"></div>
<div class="a" style="left:222px;top:142px;width:690px;height:476px;box-sizing:border-box;border:1px solid #7c7a74;border-radius:2px;"></div>
<div class="a" style="left:322px;top:123px;width:73px;height:18px;box-sizing:border-box;border:1px solid #85837d;border-radius:0 4px 0 0;background:linear-gradient(#e2dfd9,#d6d2ca 50%,#c3bfb7);"></div>
<div class="t" style="left:335px;top:124px;letter-spacing:.05px">Модули</div>
<div class="a" style="left:220px;top:120px;width:103px;height:22px;box-sizing:border-box;border:1px solid #85837d;border-bottom:none;border-radius:4px 4px 0 0;background:#d4d0c8;box-shadow:inset -1px 0 0 #a8a59e;"></div>
<div class="hl" style="left:221px;top:141px;width:1px;background:#bab7b0"></div>
<div class="t" style="left:232px;top:123px;letter-spacing:.3px">Подсистема</div>
<div class="t" style="left:233px;top:152px;letter-spacing:.2px">Перечень внешних хостов:</div>
<div class="a" style="left:233px;top:170px;width:668px;height:437px;box-sizing:border-box;border:2px solid #18188c;border-radius:2px;background:#fff"></div>
<div class="a" style="left:235px;top:172px;width:664px;height:22px;background:#d4d0c8"></div>
<div class="a" style="left:235px;top:172px;width:16px;height:433px;background:#d4d0c8"></div>
<div class="a" style="left:235px;top:172px;width:610px;height:21px;background:linear-gradient(#dfdcd6,#d5d1c9 55%,#c7c3bb)"></div>
<div class="hl" style="left:235px;top:193px;width:610px;background:#76746e"></div>
<div class="hl" style="left:235px;top:172px;width:610px;background:#e9e7e2"></div>
<div class="vl" style="left:249px;top:172px;height:22px;background:#a19e97"></div>
<div class="vl" style="left:250px;top:172px;height:22px;background:#6e6c67"></div>
<div class="vl" style="left:251px;top:173px;height:20px;background:#e6e3de"></div>
<div class="vl" style="left:319px;top:172px;height:22px;background:#a19e97"></div>
<div class="vl" style="left:320px;top:172px;height:22px;background:#6e6c67"></div>
<div class="vl" style="left:321px;top:173px;height:20px;background:#e6e3de"></div>
<div class="vl" style="left:403px;top:172px;height:22px;background:#a19e97"></div>
<div class="vl" style="left:404px;top:172px;height:22px;background:#6e6c67"></div>
<div class="vl" style="left:405px;top:173px;height:20px;background:#e6e3de"></div>
<div class="vl" style="left:487px;top:172px;height:22px;background:#a19e97"></div>
<div class="vl" style="left:488px;top:172px;height:22px;background:#6e6c67"></div>
<div class="vl" style="left:489px;top:173px;height:20px;background:#e6e3de"></div>
<div class="vl" style="left:627px;top:172px;height:22px;background:#a19e97"></div>
<div class="vl" style="left:628px;top:172px;height:22px;background:#6e6c67"></div>
<div class="vl" style="left:629px;top:173px;height:20px;background:#e6e3de"></div>
<div class="vl" style="left:711px;top:172px;height:22px;background:#a19e97"></div>
<div class="vl" style="left:712px;top:172px;height:22px;background:#6e6c67"></div>
<div class="vl" style="left:713px;top:173px;height:20px;background:#e6e3de"></div>
<div class="vl" style="left:773px;top:172px;height:22px;background:#a19e97"></div>
<div class="vl" style="left:774px;top:172px;height:22px;background:#6e6c67"></div>
<div class="vl" style="left:775px;top:173px;height:20px;background:#e6e3de"></div>
<div class="vl" style="left:844px;top:172px;height:22px;background:#76746e"></div>
<div class="t" style="left:251px;top:175px;width:69px;text-align:center;letter-spacing:.04px">Id</div>
<div class="t" style="left:321px;top:175px;width:83px;text-align:center;letter-spacing:.04px">Имя</div>
<div class="t" style="left:405px;top:175px;width:83px;text-align:center;letter-spacing:.04px">Транспорт</div>
<div class="t" style="left:489px;top:175px;width:139px;text-align:center;letter-spacing:.04px">Адрес</div>
<div class="a" style="left:632px;top:175px;width:75px;height:16px;overflow:hidden"><div class="t" style="left:-7px;top:0;width:89px;text-align:center;letter-spacing:.03px">Пользователь</div></div>
<div class="t" style="left:713px;top:175px;width:61px;text-align:center;letter-spacing:.04px">Пароль</div>
<div class="t" style="left:775px;top:175px;width:69px;text-align:center;letter-spacing:.04px">Режим</div>
<div class="a" style="left:235px;top:194px;width:15px;height:28px;background:linear-gradient(#dfdcd6,#d5d1c9 55%,#c7c3bb)"></div>
<div class="a" style="left:235px;top:223px;width:15px;height:21px;background:linear-gradient(#dfdcd6,#d5d1c9 55%,#c7c3bb)"></div>
<div class="vl" style="left:250px;top:194px;height:51px;background:#8d8a84"></div>
<div class="hl" style="left:235px;top:222px;width:16px;background:#76746e"></div>
<div class="hl" style="left:235px;top:244px;width:16px;background:#76746e"></div>
<div class="hl" style="left:235px;top:194px;width:15px;background:#e9e7e2"></div>
<div class="hl" style="left:235px;top:223px;width:15px;background:#e9e7e2"></div>
<div class="t" style="left:235px;top:200px;width:15px;text-align:center">1</div>
<div class="t" style="left:235px;top:226px;width:15px;text-align:center">2</div>
<div class="vl" style="left:319px;top:194px;height:51px;background:#a9a9ad"></div>
<div class="vl" style="left:403px;top:194px;height:51px;background:#a9a9ad"></div>
<div class="vl" style="left:487px;top:194px;height:51px;background:#a9a9ad"></div>
<div class="vl" style="left:627px;top:194px;height:51px;background:#a9a9ad"></div>
<div class="vl" style="left:711px;top:194px;height:51px;background:#a9a9ad"></div>
<div class="vl" style="left:773px;top:194px;height:51px;background:#a9a9ad"></div>
<div class="vl" style="left:844px;top:194px;height:51px;background:#a9a9ad"></div>
<div class="hl" style="left:251px;top:222px;width:594px;background:#a9a9ad"></div>
<div class="hl" style="left:251px;top:244px;width:594px;background:#a9a9ad"></div>
<svg style="left:252px;top:195px" width="66" height="26"><rect x=".5" y=".5" width="65" height="25" fill="none" stroke="#000" stroke-width="1" stroke-dasharray="1 1" shape-rendering="crispEdges"/></svg>
<div class="cell" style="left:251px;top:201px;">Main</div>
<div class="cell" style="left:320px;top:194px;"><span style="letter-spacing:.35px">os-102-<br>server2</span></div>
<div class="cell" style="left:404px;top:201px;">Сокеты</div>
<div class="cell" style="left:488px;top:194px;"><span class="k">TCP</span>:<span style="letter-spacing:.35px">os-102-<br>server2:<span class="d">10005</span></span></div>
<div class="cell" style="left:628px;top:201px;">conf</div>
<div class="cell" style="left:712px;top:201px;"><span style="letter-spacing:1px">*******</span></div>
<div class="cell" style="left:774px;top:201px;">Системн.</div>
<div class="cell" style="left:251px;top:226px;">LocalTest</div>
<div class="cell" style="left:320px;top:226px;">LH</div>
<div class="cell" style="left:404px;top:226px;">Сокеты</div>
<div class="cell" style="left:488px;top:226px;"><span class="k">TCP</span>:localhost:<span class="d">11005</span></div>
<div class="cell" style="left:628px;top:226px;">root</div>
<div class="cell" style="left:712px;top:226px;"><span style="letter-spacing:1px">*******</span></div>
<div class="cell" style="left:774px;top:226px;">Системн.</div>
<svg style="left:0;top:0" width="928" height="657"><path d="M354 466L354 452L380 420L407 386L430 354L452.3 328L461 320L466 313.5L472.2 310.8L473.6 307.3L480.4 301.2L487.3 296.4L488.6 292.3L491.4 289.5L496.8 286.1L498.2 282L503 277.9L507.1 275.8L509.2 274.5L508.5 273.5L504.4 275.1L498.2 276.5L496.8 278.6L492 279.9L487.3 280.9L474.2 281.3L473.6 282.7L456 282.7L456 268L461.2 266.9L474.2 266.2L479 264.2L483.8 262.1L488.6 260L494.8 258.7L500.3 258L501 253.9L506.4 252L538.6 252L538.6 253.9L546.8 253.9L546.8 269L544.8 271L542.7 273.1L540.7 275.1L536.6 277.2L534.5 279.2L532.5 281.3L530.4 285.4L528.4 289.5L527.7 295L527 295L527 330L512 330L512 299.8L507.8 301.8L503.7 306L500.3 310L496.2 314.2L492 318.3L487.9 322.4L483.8 326.5L480.4 330L475.1 333.7L463.7 347.4L439 376L418 407L393 436.5L369 466Z" fill="#000" shape-rendering="crispEdges"/></svg>
<div class="t" style="left:6px;top:637px;letter-spacing:.04px">/WorkStation/sub_Transport/%2fsub%2fehost</div>
<div class="a" style="left:841px;top:636px;width:20px;height:20px;box-sizing:border-box;border:1px solid #8a8882;border-radius:2px;"></div>
<div class="a" style="left:863px;top:636px;width:11px;height:20px;box-sizing:border-box;border:1px solid #8a8882;border-radius:2px;"></div>
<div class="a" style="left:876px;top:636px;width:30px;height:20px;box-sizing:border-box;border:1px solid #8a8882;border-radius:2px;"></div>
<div class="a" style="left:844px;top:638px;width:14px;height:16px;box-sizing:border-box;background:#f0efec;border-top:1px solid #fff;border-left:1px solid #fff;border-right:1px solid #000;border-bottom:1px solid #000;box-shadow:inset -1px -1px 0 #85837d"></div>
<svg style="left:846px;top:644px" width="9" height="5"><polygon points="0.5,0.5 8.5,0.5 4.5,4.500" fill="#000"/></svg>
<div class="t" style="left:865px;top:638px;">*</div>
<div class="t" style="left:878px;top:638px;color:#ff0000;letter-spacing:.2px">root</div>
<svg style="left:912px;top:641px" width="16" height="16"><path d="M3 16.5L16.5 3" stroke="#fff" stroke-width="1.400"/><path d="M4.7 16.5L16.5 4.7" stroke="#5e5c58" stroke-width="2"/><path d="M7 16.5L16.5 7" stroke="#fff" stroke-width="1.400"/><path d="M8.7 16.5L16.5 8.7" stroke="#5e5c58" stroke-width="2"/><path d="M11 16.5L16.5 11" stroke="#fff" stroke-width="1.400"/><path d="M12.7 16.5L16.5 12.7" stroke="#5e5c58" stroke-width="2"/></svg>
</div></body></html>
